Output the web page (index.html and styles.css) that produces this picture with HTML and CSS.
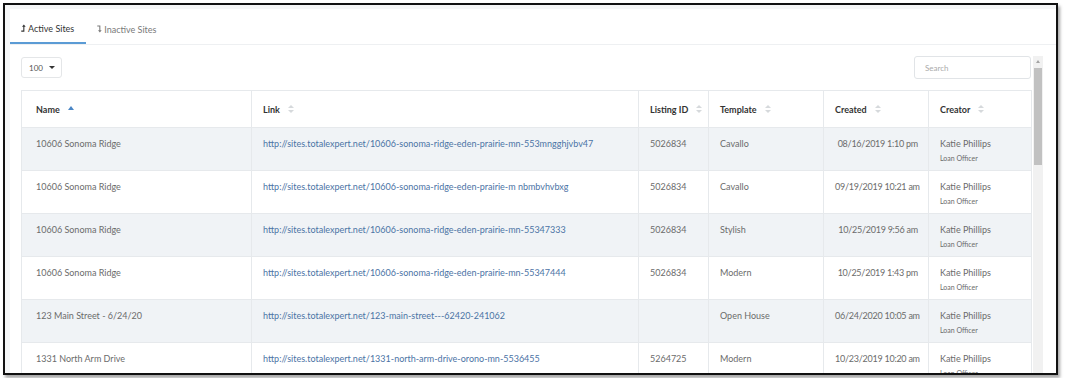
FILE: index.html
```html
<!DOCTYPE html>
<html lang="en">
<head>
  <meta charset="UTF-8" />
  <title>Sites</title>
  <link rel="stylesheet" href="styles.css">
</head>
<body>
  <div class="frame">
    <div class="panel">
      <div class="tabs">
        <div class="tab active">
          <svg class="tab-icon" viewBox="0 0 6 9" width="5" height="8"><path d="M0.3 8.2H3.4V2" fill="none" stroke="currentColor" stroke-width="1.3"/><path d="M1.2 3L3.4 0.3L5.6 3Z" fill="currentColor"/></svg>
          Active Sites
        </div>
        <div class="tab">
          <svg class="tab-icon" viewBox="0 0 6 9" width="5" height="8"><path d="M0.3 0.8H3.4V7" fill="none" stroke="currentColor" stroke-width="1.3"/><path d="M1.2 6L3.4 8.7L5.6 6Z" fill="currentColor"/></svg>
          Inactive Sites
        </div>
      </div>

      <div class="body">
        <div class="scroll-area">
          <div class="controls">
            <div class="page-size">100 <span class="caret"></span></div>
            <div class="search">Search</div>
          </div>

          <table class="sites">
            <colgroup>
              <col style="width:230px"><col style="width:387px"><col style="width:70px">
              <col style="width:115px"><col style="width:105px"><col style="width:103px">
            </colgroup>
            <thead>
              <tr>
                <th class="first">Name <span class="sort-up"></span></th>
                <th>Link <span class="sort"></span></th>
                <th>Listing ID <span class="sort"></span></th>
                <th>Template <span class="sort"></span></th>
                <th>Created <span class="sort"></span></th>
                <th>Creator <span class="sort"></span></th>
              </tr>
            </thead>
            <tbody id="rows"></tbody>
          </table>
        </div>
        <div class="scrollbar">
          <div class="arrow"></div>
          <div class="thumb"></div>
        </div>
      </div>
    </div>
  </div>

  <script>
    const sites = [
      ["10606 Sonoma Ridge", "http://sites.totalexpert.net/10606-sonoma-ridge-eden-prairie-mn-553mngghjvbv47", "5026834", "Cavallo", "08/16/2019 1:10 pm"],
      ["10606 Sonoma Ridge", "http://sites.totalexpert.net/10606-sonoma-ridge-eden-prairie-m nbmbvhvbxg", "5026834", "Cavallo", "09/19/2019 10:21 am"],
      ["10606 Sonoma Ridge", "http://sites.totalexpert.net/10606-sonoma-ridge-eden-prairie-mn-55347333", "5026834", "Stylish", "10/25/2019 9:56 am"],
      ["10606 Sonoma Ridge", "http://sites.totalexpert.net/10606-sonoma-ridge-eden-prairie-mn-55347444", "5026834", "Modern", "10/25/2019 1:43 pm"],
      ["123 Main Street - 6/24/20", "http://sites.totalexpert.net/123-main-street---62420-241062", "", "Open House", "06/24/2020 10:05 am"],
      ["1331 North Arm Drive", "http://sites.totalexpert.net/1331-north-arm-drive-orono-mn-5536455", "5264725", "Modern", "10/23/2019 10:20 am"]
    ];

    document.getElementById("rows").innerHTML = sites.map(s => `
      <tr>
        <td class="first">${s[0]}</td>
        <td><a href="#">${s[1]}</a></td>
        <td>${s[2]}</td>
        <td>${s[3]}</td>
        <td class="date">${s[4]}</td>
        <td><div class="creator">Katie Phillips</div><div class="role">Loan Officer</div></td>
      </tr>
    `).join("");
  </script>
</body>
</html>
```

FILE: styles.css
```css
body {
  margin: 0;
  padding: 3px;
  background: #fff;
  font-family: Lato, 'Open Sans', sans-serif;
  color: #6b6b6b;
}
.frame {
  box-sizing: border-box;
  width: 1055px;
  height: 372px;
  border: 2px solid #111;
  box-shadow: 2px 3px 3px rgba(0, 0, 0, 0.35);
  background: #f5f6f7;
  overflow: hidden;
  padding: 4px 0 0 5px;
}
.panel {
  background: #fff;
  height: 100%;
}
.tabs {
  display: flex;
  height: 35px;
  border-bottom: 1px solid #eef0f2;
}
.tab {
  display: flex;
  align-items: center;
  gap: 2px;
  padding: 6px 12px 0 11px;
  font-size: 9px;
  color: #7a7a7a;
}
.tab.active {
  color: #333;
  border-bottom: 2px solid #5b9bd5;
  padding-right: 12px;
}
.tab-icon {
  margin-top: -1px;
}
.body {
  display: flex;
  padding-top: 11px;
  height: 320px;
}
.scroll-area {
  width: 1010px;
  padding-left: 11px;
}
.controls {
  display: flex;
  justify-content: space-between;
  align-items: center;
  height: 23px;
  margin-bottom: 11px;
}
.page-size {
  box-sizing: border-box;
  width: 41px;
  height: 21px;
  border: 1px solid #e4e6e8;
  border-radius: 3px;
  font-size: 8px;
  color: #555;
  display: flex;
  align-items: center;
  padding-left: 7px;
  gap: 6px;
}
.caret {
  width: 0;
  height: 0;
  border-left: 3px solid transparent;
  border-right: 3px solid transparent;
  border-top: 3px solid #333;
}
.search {
  box-sizing: border-box;
  width: 117px;
  height: 23px;
  border: 1px solid #e1e4e7;
  border-radius: 3px;
  font-size: 8px;
  color: #aaa;
  display: flex;
  align-items: center;
  padding-left: 10px;
}
.sites {
  width: 1010px;
  border-collapse: collapse;
  table-layout: fixed;
  font-size: 9px;
}
.sites th,
.sites td {
  border: 1px solid #e6e9ec;
  padding: 0 11px;
  text-align: left;
  white-space: nowrap;
  overflow: hidden;
}
.sites th {
  height: 36px;
  color: #333;
  font-weight: 700;
  vertical-align: middle;
}
.sites td {
  height: 43px;
  vertical-align: top;
  padding-top: 10px;
  box-sizing: border-box;
  line-height: 12px;
}
.sites .first {
  padding-left: 14px;
}
.sites tbody tr:nth-child(odd) td {
  background: #f0f3f6;
}
.sites td.date {
  text-align: right;
  padding-right: 10px;
  letter-spacing: -0.25px;
}
.sites a {
  color: #4b73a5;
  text-decoration: none;
}
.sort,
.sort-up {
  display: inline-block;
  vertical-align: middle;
  margin-left: 6px;
  width: 6px;
  height: 8px;
  position: relative;
  top: -1px;
}
.sort::before,
.sort::after,
.sort-up::before {
  content: "";
  position: absolute;
  left: 0;
  border-left: 3px solid transparent;
  border-right: 3px solid transparent;
}
.sort::before {
  top: 0;
  border-bottom: 3px solid #d6d9dc;
}
.sort::after {
  bottom: 0;
  border-top: 3px solid #d6d9dc;
}
.sort-up::before {
  top: 1px;
  border-bottom: 4px solid #4a86c5;
}
.creator {
  line-height: 12px;
}
.role {
  font-size: 7px;
  line-height: 16px;
}
.scrollbar {
  width: 10px;
  margin-left: 2px;
  background: #f1f1f1;
}
.arrow {
  height: 11px;
  position: relative;
}
.arrow::before {
  content: "";
  position: absolute;
  left: 3px;
  top: 4px;
  border-left: 2px solid transparent;
  border-right: 2px solid transparent;
  border-bottom: 3px solid #a3a3a3;
}
.thumb {
  margin: 1px 1px 0 1px;
  height: 97px;
  background: #c1c1c1;
}
```
